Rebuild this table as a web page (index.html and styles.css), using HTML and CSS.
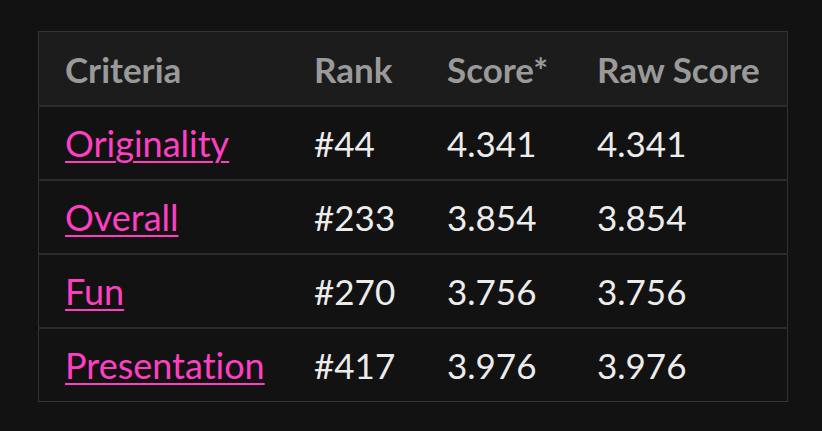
FILE: index.html
```html
<!DOCTYPE html>
<html>
<head>
<meta charset="utf-8">
<link rel="stylesheet" href="styles.css">
</head>
<body>
<div class="wrap">
<table class="results">
  <thead>
    <tr><th class="c1">Criteria</th><th class="c2">Rank</th><th class="c3">Score*</th><th class="c4">Raw Score</th></tr>
  </thead>
  <tbody>
    <tr><td><a href="#">Originality</a></td><td>#44</td><td>4.341</td><td>4.341</td></tr>
    <tr><td><a href="#">Overall</a></td><td>#233</td><td>3.854</td><td>3.854</td></tr>
    <tr><td><a href="#">Fun</a></td><td>#270</td><td>3.756</td><td>3.756</td></tr>
    <tr><td><a href="#">Presentation</a></td><td>#417</td><td>3.976</td><td>3.976</td></tr>
  </tbody>
</table>
</div>
</body>
</html>
```

FILE: styles.css
```css
html, body {
  margin: 0;
  background: #121212;
}
.wrap {
  padding: 31px 34px 0 38px;
}
.results {
  border-collapse: collapse;
  border: 1px solid #333333;
  font-family: Lato, "Open Sans", sans-serif;
  font-size: 35px;
  font-variant-ligatures: none;
  width: 750px;
  table-layout: fixed;
}
.results th {
  background: #1c1c1c;
  color: #9a9a9a;
  font-weight: bold;
  text-align: left;
  height: 73px;
  padding: 0 0 0 26px;
  border-bottom: 2px solid #2c2c2c;
}
.results td {
  color: #ececec;
  height: 72px;
  padding: 0 0 0 26px;
  border-bottom: 2px solid #2c2c2c;
}
.results tbody tr:last-child td {
  border-bottom: 1px solid #333333;
}
.c1 { width: 223px; }
.c2 { width: 107px; }
.c3 { width: 124px; }
.results a {
  color: #ff3fc1;
  font-size: 36px;
  text-decoration: underline;
  text-underline-offset: 4px;
  text-decoration-thickness: 2px;
}
```
